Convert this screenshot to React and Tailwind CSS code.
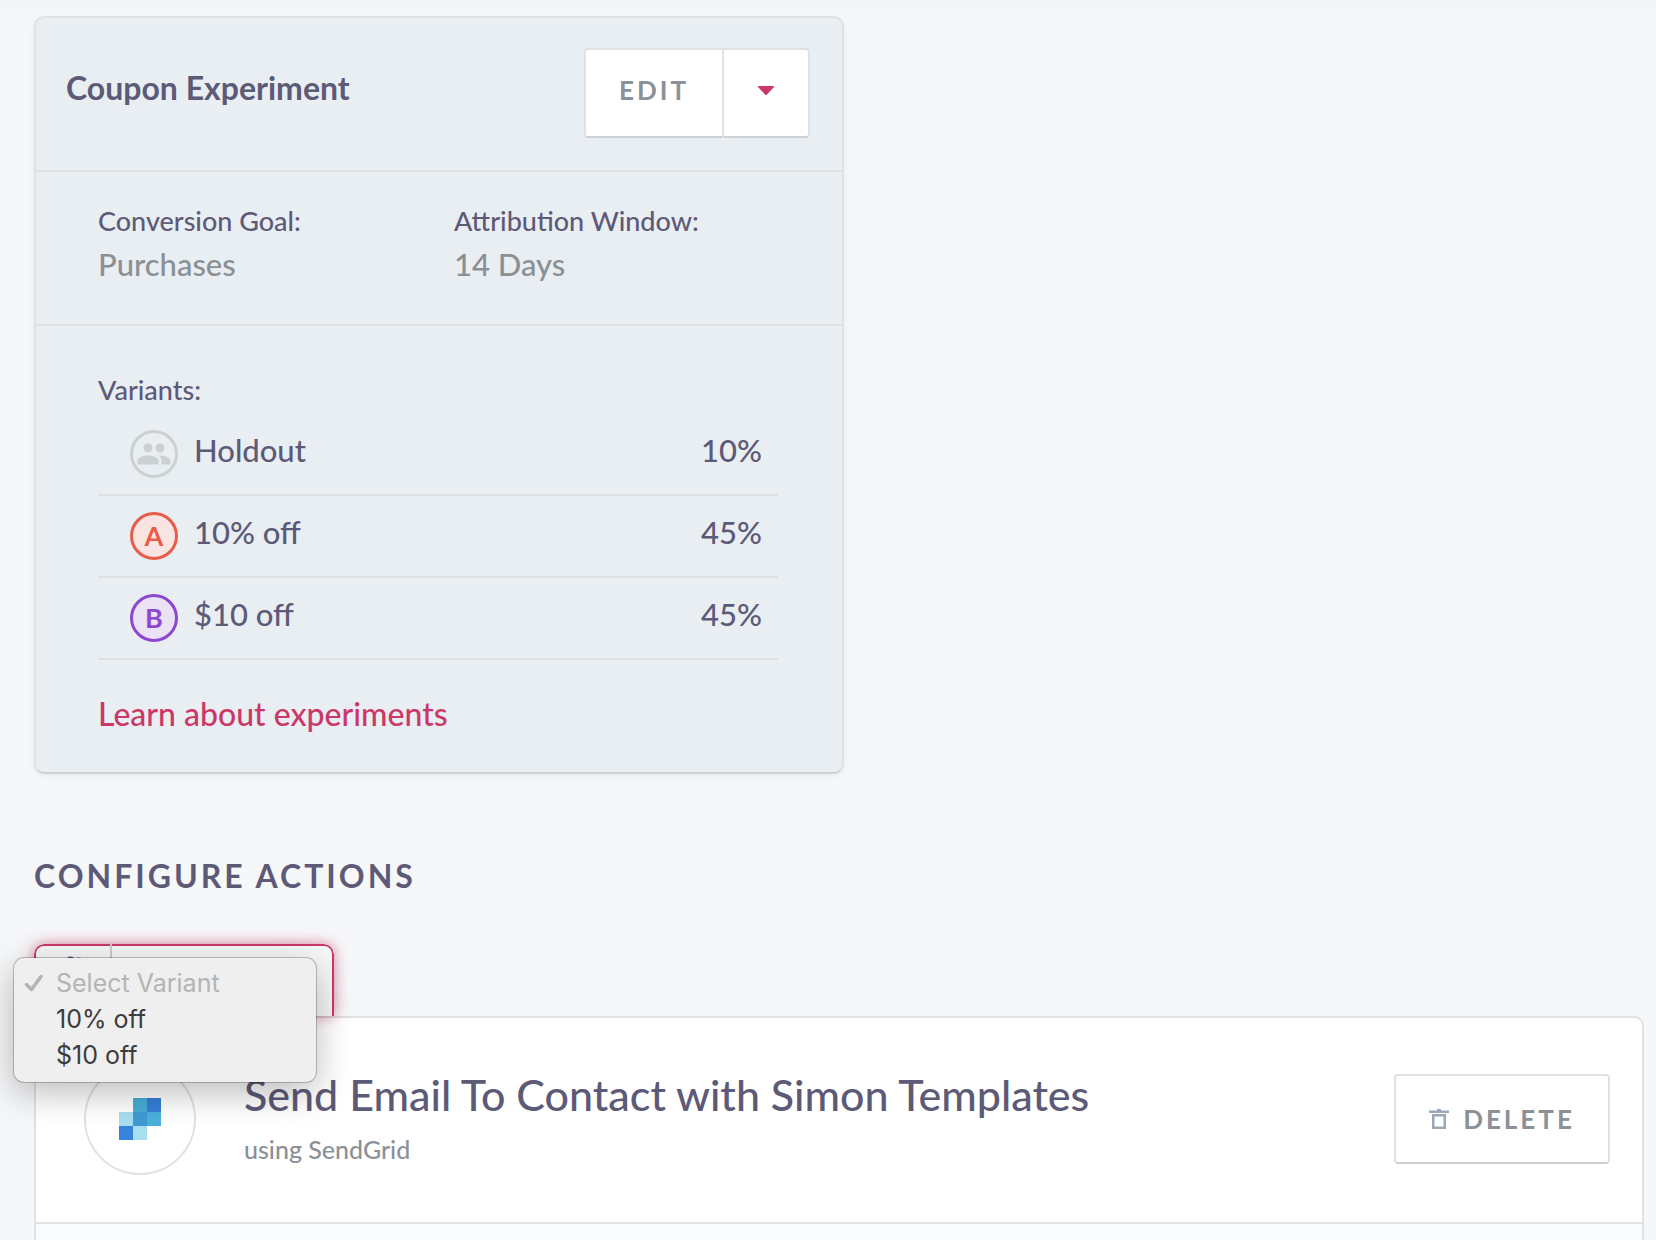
import { MdPeople } from 'react-icons/md';

const DETAILS = [
  { label: 'Conversion Goal:', value: 'Purchases' },
  { label: 'Attribution Window:', value: '14 Days' },
];

const VARIANTS = [
  { name: 'Holdout', share: '10%', badge: 'border-[3px] border-[#cbd0d3] text-[#cbd0d3]' },
  { name: '10% off', share: '45%', letter: 'A', badge: 'border-[3px] border-[#e85c4a] bg-[#fae4e2] text-[#e85c4a]' },
  { name: '$10 off', share: '45%', letter: 'B', badge: 'border-[3px] border-[#8d48d2] bg-[#ece2f6] text-[#8d48d2]' },
];

const buttonStyles = 'flex h-[90px] items-center justify-center border-2 border-[#dfe1e3] border-b-[#ccd1d5] bg-white text-[26px] font-bold tracking-[3px] text-[#8a9197]';

function SendGridLogo() {
  return (
    <svg viewBox="0 0 42 42" className="size-[42px]" shapeRendering="crispEdges" aria-hidden="true">
      <path d="M14 0h14v14H14z" fill="#47acd6" />
      <path d="M28 0h14v14H28z" fill="#367fd8" />
      <path d="M0 14h14v14H0z" fill="#a7dff0" />
      <path d="M14 14h14v14H14z" fill="#3f9ad3" />
      <path d="M28 14h14v14H28z" fill="#4bb1dc" />
      <path d="M0 28h14v14H0z" fill="#3783dc" />
      <path d="M14 28h14v14H14z" fill="#a7dff0" />
    </svg>
  );
}

function TrashIcon() {
  return (
    <svg viewBox="0 0 20 20" className="size-5" fill="#9ba7b7" aria-hidden="true">
      <path d="M8 0h4v1.500h8v2.500H0V1.500h8z" />
      <path d="M3 5h14v15H3zM5.500 7.500v10h9v-10z" fillRule="evenodd" />
    </svg>
  );
}

function CheckIcon() {
  return (
    <svg viewBox="0 0 20 18" className="h-[18px] w-5" fill="none" stroke="#b4b4b4" strokeWidth="3.500" strokeLinecap="round" strokeLinejoin="round" aria-hidden="true">
      <path d="M2.500 10.500 7.500 15.500 17 2.500" />
    </svg>
  );
}

function AudienceIcon() {
  return (
    <svg viewBox="0 0 28 24" className="h-6 w-7" fill="currentColor" aria-hidden="true">
      <circle cx="11.500" cy="5.500" r="5" />
      <circle cx="20" cy="5.500" r="4" />
      <path d="M1 22c0-6 4-9 10-9s10 3 10 9zM22 22c0-4-1-7-3-9 5 0 8 3 8 9z" />
    </svg>
  );
}

function ExperimentCard() {
  return (
    <section className="w-full max-w-[810px] rounded-[10px] border-2 border-[#dfe1e3] border-b-[#cbd2d3] bg-[#e9eef3] shadow-[0_2px_6px_rgba(0,0,0,0.06)]">
      <header className="flex items-start justify-between border-b-2 border-[#dfe1e3] pt-[30px] pr-8 pb-8 pl-[30px]">
        <h2 className="pt-5 text-[32px] leading-10 font-bold">Coupon Experiment</h2>
        <div className="flex">
          <button type="button" className={`${buttonStyles} w-[138px] rounded-l-[4px] border-r-0 pb-1.5`}>EDIT</button>
          <button type="button" aria-label="More actions" className={`${buttonStyles} w-[88px] rounded-r-[4px] pb-1.5`}>
            <svg viewBox="0 0 16 9" className="h-[9px] w-4" aria-hidden="true">
              <path d="M0 0h16v1L9 8.500q-1 1-2 0L0 1z" fill="#cb3867" />
            </svg>
          </button>
        </div>
      </header>

      <dl className="grid grid-cols-2 border-b-2 border-[#dfe1e3] pt-7 pr-8 pb-[38px] pl-[62px]">
        {DETAILS.map((item) => (
          <div key={item.label}>
            <dt className="text-[27px] leading-[42px]">{item.label}</dt>
            <dd className="text-[31px] leading-[44px] text-[#8a9093]">{item.value}</dd>
          </div>
        ))}
      </dl>

      <div className="pt-[42px] pr-16 pb-[34px] pl-[62px]">
        <h3 className="pb-0.5 text-[27px] leading-[44px]">Variants:</h3>
        <ul>
          {VARIANTS.map((variant) => (
            <li key={variant.name} className="flex h-[82px] items-center gap-4 border-b-2 border-[#dfe1e3] pr-4 pl-8">
              <span className={`flex size-12 items-center justify-center rounded-full text-[27px] font-bold ${variant.badge}`}>
                {variant.letter || <MdPeople className="size-9 shrink-0" aria-hidden="true" />}
              </span>
              <span className="grow pb-2 text-[31px] leading-10">{variant.name}</span>
              <span className="pb-2 text-[31px] leading-10">{variant.share}</span>
            </li>
          ))}
        </ul>
        <a href="#experiments" className="mt-[30px] block text-[32px] leading-[48px] text-[#cb3867]">Learn about experiments</a>
      </div>
    </section>
  );
}

function VariantPicker() {
  return (
    <div className="relative h-[72px] w-[300px]">
      <div className="flex h-full overflow-hidden rounded-t-[10px] shadow-[0_0_14px_rgba(203,56,103,0.6)]">
        <label htmlFor="variant" aria-label="Variant" className="flex w-[76px] items-start justify-center rounded-tl-[10px] border-t-2 border-l-2 border-[#cb3867] bg-[#f6f7f9] pt-2.5">
          <AudienceIcon />
        </label>
        <span className="w-0.5 bg-[#c8cccf]" />
        <select id="variant" defaultValue="" className="grow appearance-none rounded-tr-[10px] border-t-2 border-r-2 border-[#cb3867] bg-[#f6f7f9] pl-4 text-[26px] outline-none">
          <option value="" disabled />
          <option>10% off</option>
          <option>$10 off</option>
        </select>
      </div>
      <ul
        role="listbox"
        aria-label="Variant options"
        className="absolute top-[14px] -left-5 z-10 w-[302px] rounded-[10px] bg-[#efefef] pt-[7px] pb-[9px] font-['Inter',sans-serif] text-[25px] leading-9 font-normal text-[#3c3c3c] shadow-[0_0_0_1px_rgba(0,0,0,0.22),0_10px_36px_rgba(0,0,0,0.28)]"
      >
        <li role="option" aria-selected="true" aria-disabled="true" className="flex items-center gap-3 pl-[10px] text-[#b4b4b4]">
          <CheckIcon />
          Select Variant
        </li>
        <li role="option" aria-selected="false" className="pl-[42px]">10% off</li>
        <li role="option" aria-selected="false" className="pl-[42px]">$10 off</li>
      </ul>
    </div>
  );
}

export default function App() {
  return (
    <main className="flex min-h-screen flex-col bg-[#f6f7f9] bg-[linear-gradient(#f3f4f6,#f6f7f9_18px)] pt-4 pr-3 pl-[34px] font-['Lato',sans-serif] font-medium text-[#5d5a78]">
      <ExperimentCard />

      <h2 className="mt-20 mb-[46px] text-[32px] leading-[44px] font-bold tracking-[3px]">CONFIGURE ACTIONS</h2>

      <VariantPicker />

      <section className="flex grow flex-col rounded-t-[10px] border-2 border-b-0 border-[#dfe1e3] bg-[#fafbfd]">
        <div className="flex items-center rounded-t-[8px] border-b-2 border-[#dfe1e3] bg-white pt-[45px] pr-8 pb-[47px] pl-12">
          <span className="flex size-28 shrink-0 items-center justify-center rounded-full border-2 border-[#dfe1e3]">
            <SendGridLogo />
          </span>
          <div className="grow pl-12">
            <h3 className="text-[43px] leading-[60px]">Send Email To Contact with Simon Templates</h3>
            <p className="text-[25px] leading-[48px] text-[#8a9197]">using SendGrid</p>
          </div>
          <button type="button" className={`${buttonStyles} w-[216px] gap-3.5 rounded-[4px]`}>
            <TrashIcon />
            DELETE
          </button>
        </div>
      </section>
    </main>
  );
}
